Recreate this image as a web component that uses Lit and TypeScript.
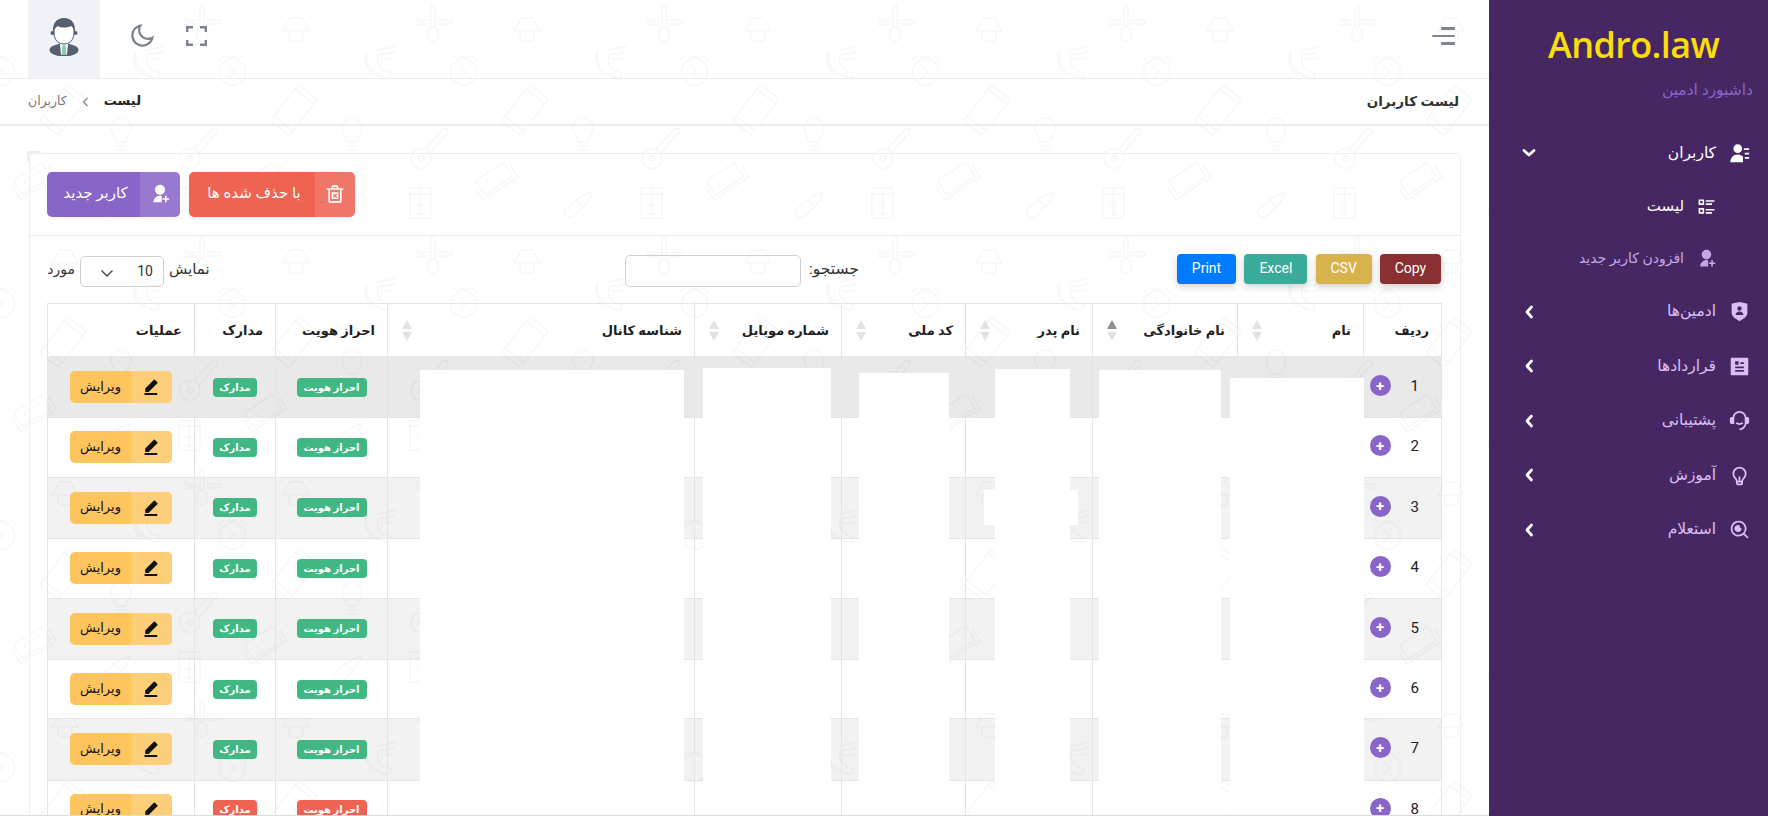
import { LitElement, html, css, svg, unsafeCSS } from "lit";
import { customElement } from "lit/decorators.js";

const tileBody = `
<g fill="none" stroke="#f7f7f7" stroke-width="1.500" stroke-linecap="round" stroke-linejoin="round">
  <g id="fork">
    <ellipse cx="202" cy="34" rx="5.500" ry="7.500"/>
    <path d="M200 26V7a2 2 0 0 1 4 0v19"/>
    <path d="M206 20h13a2 2 0 0 1 0 4h-13M197 20h-6l-6-1M197 24h-6l-6 1M185 22h8"/>
  </g>
  <path d="M59 18h12l7 13H52zM58 31v7a3 3 0 0 0 3 3h8a3 3 0 0 0 3-3v-7"/>
  <path d="M136 50c-3 14 6 26 20 28 4 1 6-5 2-6-8-1-13-8-11-16M146 50c6-1 14-2 18-4M148 54c6 0 12-1 15-2M150 59c5 1 9 0 12-1M134 54c-1 8 2 16 8 21"/>
  <g id="timer"><circle cx="1" cy="72" r="13.500"/><path d="M-3 66l7 6-7 6M-9 57l-4 3M11 57l4 3M-4 57h10"/></g>
  <g transform="translate(232 0)"><circle cx="1" cy="72" r="13.500"/><path d="M-3 66l7 6-7 6M-9 57l-4 3M11 57l4 3M-4 57h10"/></g>
  <g transform="rotate(38 63 110)"><rect x="51" y="87" width="24" height="46" rx="3"/><path d="M51 93h24M51 127h24"/></g>
  <path d="M116 142c0-5-5-7-5-14a10 10 0 0 1 20 0c0 7-5 9-5 14zM116 146h10M118 150h6"/>
  <g transform="rotate(42 202 145)"><circle cx="202" cy="163" r="10"/><circle cx="202" cy="163" r="2.500"/><path d="M199 153v-27l3-3 3 3v4l-2 2 2 2v4l-2 2 2 2v11"/></g>
  <g transform="rotate(-33 33 180)"><rect x="16" y="170" width="34" height="17" rx="3"/><path d="M12 176v14h42v-14M18 190v3M48 190v3M25 177h1M33 177h1M41 177h1"/></g>
  <path d="M179 188h21v30h-21zM189.500 188v30M179 194h21M186 204l3 3 3-3M186 214h7"/>
  <path d="M103 215c-2-3 0-5 2-7l12-10c4-3 9-5 13-6-1 5-3 9-7 13l-11 11c-3 2-6 2-9-1zM113 199l9 8"/>
</g>`;
const tile = `<svg xmlns="http://www.w3.org/2000/svg" width="231" height="232" viewBox="0 0 231 232">${tileBody}</svg>`;
const tileUrl = unsafeCSS(`url("data:image/svg+xml,${encodeURIComponent(tile)}")`);
const chevUrl = unsafeCSS(`url("data:image/svg+xml,${encodeURIComponent('<svg xmlns="http://www.w3.org/2000/svg" width="14" height="9" viewBox="0 0 14 9"><path d="M1.500 1.500L7 7l5.500-5.500" fill="none" stroke="#444" stroke-width="1.300"/></svg>')}")`);

const I = {
  userList: svg`<path d="M10 11.500a5 5 0 1 1 0-10 5 5 0 0 1 0 10zM1.500 22c0-5 3.500-9 8.500-9 2.500 0 4.500 1 6 2.500V22z"/><path d="M17 6h6v2h-6zM18 11h5v2h-5zM18 16h5v2h-5z"/>`,
  listSet: svg`<path d="M2 3h7v7H2zM4 5v3h3V5zM2 14h7v7H2zM4 16v3h3v-3zM11 4h11v2H11zM11 8h8v2h-8zM11 15h11v2H11zM11 19h8v2h-8z"/>`,
  userAdd: svg`<path d="M14 14.252V22H4a8 8 0 0 1 10-7.748zM12 13c-3.315 0-6-2.685-6-6s2.685-6 6-6 6 2.685 6 6-2.685 6-6 6zm6 4v-3h2v3h3v2h-3v3h-2v-3h-3v-2h3z"/>`,
  shield: svg`<path d="M3.783 2.826L12 1l8.217 1.826a1 1 0 0 1 .783.976v9.987a6 6 0 0 1-2.672 4.992L12 23l-6.328-4.219A6 6 0 0 1 3 13.790V3.802a1 1 0 0 1 .783-.976zM12 11a2.500 2.500 0 1 0 0-5 2.500 2.500 0 0 0 0 5zm-4.473 5h8.946a4.500 4.500 0 0 0-8.946 0z"/>`,
  article: svg`<path d="M21 22H3a1 1 0 0 1-1-1V3a1 1 0 0 1 1-1h18a1 1 0 0 1 1 1v18a1 1 0 0 1-1 1zM7 6v4h4V6H7zm0 6v2h10v-2H7zm0 4v2h10v-2H7zm6-9v2h4V7h-4z"/>`,
  headset: svg`<path d="M21 8a2 2 0 0 1 2 2v4a2 2 0 0 1-2 2h-1.062A8.001 8.001 0 0 1 12 23v-2a6 6 0 0 0 6-6V9A6 6 0 1 0 6 9v7H3a2 2 0 0 1-2-2v-4a2 2 0 0 1 2-2h1.062a8.001 8.001 0 0 1 15.876 0H21z"/><path d="M7.760 15.785l1.060-1.696A5.972 5.972 0 0 0 12 15a5.972 5.972 0 0 0 3.180-.911l1.060 1.696A7.963 7.963 0 0 1 12 17a7.963 7.963 0 0 1-4.240-1.215z"/>`,
  bulb: svg`<path d="M9.973 18H11v-5h2v5h1.027c.132-1.202.745-2.194 1.740-3.277.113-.122.832-.867.917-.973a6 6 0 1 0-9.370-.002c.086.107.807.853.918.974.996 1.084 1.609 2.076 1.741 3.278zM10 20v1h4v-1h-4zm-4.246-5a8 8 0 1 1 12.490.002C17.624 15.774 16 17 16 18.500V21a2 2 0 0 1-2 2h-4a2 2 0 0 1-2-2v-2.500C8 17 6.375 15.774 5.754 15z"/>`,
  search: svg`<path d="M18.031 16.617l4.283 4.282-1.415 1.415-4.282-4.283A8.960 8.960 0 0 1 11 20c-4.968 0-9-4.032-9-9s4.032-9 9-9 9 4.032 9 9a8.960 8.960 0 0 1-1.969 5.617zm-2.006-.742A6.977 6.977 0 0 0 18 11c0-3.868-3.133-7-7-7-3.868 0-7 3.132-7 7 0 3.867 3.132 7 7 7a6.977 6.977 0 0 0 4.875-1.975l.150-.150z"/><path d="M12.500 7.300a2 2 0 0 0 1.700 3 4 4 0 1 1-3.200-3.300c.5 0 1 .1 1.500.3z"/>`,
  trash: svg`<path d="M8 5V3a1.500 1.500 0 0 1 1.500-1.500h5A1.500 1.500 0 0 1 16 3v2h6v2h-2v14a1.500 1.500 0 0 1-1.500 1.500h-13A1.500 1.500 0 0 1 4 21V7H2V5zm2 0h4V3.500h-4zM6 7v13.500h12V7z"/><path d="M8 10h8v8H8zm2.400 1.300L9.300 12.400l1.600 1.600-1.600 1.600 1.100 1.100 1.600-1.600 1.600 1.600 1.100-1.100-1.600-1.600 1.600-1.600-1.100-1.100-1.600 1.600z"/>`,
  edit: svg`<path d="M7.500 18.500H3v-4.500L14.435 2.322a1 1 0 0 1 1.414 0l3.329 3.329a1 1 0 0 1 0 1.414L7.500 18.500zM2 20h17v2.500H2V20z"/>`,
  moon: svg`<path d="M10 7a7 7 0 0 0 12 4.900v.1c0 5.523-4.477 10-10 10S2 17.523 2 12 6.477 2 12 2h.1A6.979 6.979 0 0 0 10 7zm-6 5a8 8 0 0 0 15.062 3.762A9 9 0 0 1 8.238 4.938 7.999 7.999 0 0 0 4 12z"/>`,
};

const icon = (p: unknown, cls = "ic") => html`<svg class=${cls} viewBox="0 0 24 24" fill="currentColor">${p}</svg>`;
const chevron = (down: boolean) => html`<svg class="chev" viewBox="0 0 14 14" fill="none" stroke="currentColor" stroke-width="2.800" stroke-linecap="round" stroke-linejoin="round">
  <path d=${down ? "M2 4.500l5 4.500 5-4.500" : "M9.500 2L5 7l4.500 5"}></path></svg>`;

@customElement("side-bar")
class SideBar extends LitElement {
  static styles = css`
    :host { display: block; width: 279px; flex: none; height: 816px; background: #472763; color: #d9bff3;
      font-family: Roboto, "DejaVu Sans", sans-serif; direction: rtl; }
    .logo { height: 78px; display: flex; align-items: flex-end; padding-left: 59px; box-sizing: border-box;
      direction: ltr; justify-content: flex-start; font-family: "Open Sans", sans-serif; font-weight: 600; font-size: 36px; line-height: 66px; color: #fade0a; letter-spacing: -.6px; }
    .sub { color: #8a65c9; font-size: 15.500px; padding: 1px 15px 0 0; height: 24px; line-height: 22px; }
    nav { margin-top: 23px; display: flex; flex-direction: column; }
    .item { height: 54.500px; display: flex; align-items: center; padding: 0 18px 0 33px; gap: 13px; font-size: 15.500px; }
    .item span { flex: 1; margin-top: -1px; }
    .item.on { color: #fff; }
    .item.child { height: 52px; padding-right: 52px; gap: 13px; color: #c6a7e8; font-size: 14px; }
    .item.child.on { color: #fff; font-size: 15px; font-weight: 400; }
    .ic { width: 21px; height: 21px; flex: none; }
    .child .ic { width: 19px; height: 19px; }
    .chev { width: 14px; height: 14px; flex: none; color: #fff; }
  `;
  render() {
    const rows: [unknown, string][] = [[I.shield, "ادمین‌ها"], [I.article, "قراردادها"], [I.headset, "پشتیبانی"], [I.bulb, "آموزش"], [I.search, "استعلام"]];
    return html`
      <div class="logo">Andro.law</div>
      <div class="sub">داشبورد ادمین</div>
      <nav>
        <div class="item on">${icon(I.userList)}<span>کاربران</span>${chevron(true)}</div>
        <div class="item child on">${icon(I.listSet)}<span>لیست</span></div>
        <div class="item child">${icon(I.userAdd)}<span>افزودن کاربر جدید</span></div>
        ${rows.map(([p, t]) => html`<div class="item">${icon(p)}<span>${t}</span>${chevron(false)}</div>`)}
      </nav>`;
  }
}

const COLS = [78, 126, 145, 127, 124, 147, 307, 112, 81, 147];
const HEAD: [string, boolean, boolean][] = [
  ["ردیف", false, false], ["نام", true, false], ["نام خانوادگی", true, true], ["نام پدر", true, false], ["کد ملی", true, false],
  ["شماره موبایل", true, false], ["شناسه کانال", true, false], ["احراز هویت", false, false], ["مدارک", false, false], ["عملیات", false, false],
];
// Blanked-out data columns: [left, right, top] in page coordinates.
const MASKS = [[419, 683, 370], [702, 830, 368], [858, 948, 373], [994, 1069, 369], [1098, 1220, 370], [1229, 1363, 378]];

@customElement("users-table")
class UsersTable extends LitElement {
  static styles = css`
    :host { display: block; position: relative; direction: rtl; color: #222; }
    table { border-collapse: collapse; table-layout: fixed; width: 1394px; font-size: 13.500px; }
    th, td { border: 1px solid #e5e5e5; padding: 0; }
    th { height: 52px; font-weight: 700; padding: 0 12px 0 14px; font-size: 13px; color: #222; }
    th div { display: flex; justify-content: space-between; align-items: center; }
    .sort { display: flex; flex-direction: column; gap: 3px; }
    .sort i { display: block; width: 0; height: 0; border-left: 5px solid transparent; border-right: 5px solid transparent; }
    .sort .u { border-bottom: 9px solid #e2e2e2; }
    .sort .d { border-top: 9px solid #e2e2e2; }
    .sort.active .u { border-bottom-color: #8e8e8e; }
    tbody tr:nth-child(odd) { height: 61.200px; background: rgba(0,0,0,.05); }
    tbody tr:nth-child(even) { height: 59.600px; }
    tbody tr:first-child { background: rgba(0,0,0,.085); }
    td { text-align: center; vertical-align: middle; }
    .num { display: flex; align-items: center; padding-right: 22px; gap: 20px; font-size: 15px; font-family: Roboto, sans-serif; }
    .num span:first-child { margin-top: -2px; }
    .plus { width: 21px; height: 21px; border-radius: 50%; background: #8a65c9; color: #fff; display: flex; align-items: center; justify-content: center; font-size: 15px; font-weight: 700; margin-top: -3px; }
    .badge { display: inline-block; color: #fff; font-weight: 700; font-size: 10px; line-height: 19px; height: 19px; padding: 0 6px; border-radius: 4px; background: #41b883; vertical-align: middle; }
    .badge.a { width: 58px; } .badge.b { width: 32px; }
    .badge.red { background: #ee6352; }
    .edit { margin-right: 22px; display: flex; width: 102px; height: 32px; border-radius: 5px; background: #fec55f; color: #111; font-size: 13px; align-items: center; overflow: hidden; }
    .edit b { width: 41px; height: 100%; background: #fecf78; display: flex; align-items: center; justify-content: center; flex: none; }
    .edit svg { width: 18px; height: 18px; }
    .edit span { flex: 1; text-align: center; margin-top: -2px; }
    .mask { position: absolute; bottom: -300px; background: #fff; }
  `;
  render() {
    return html`
      <table>
        <colgroup>${COLS.map((w) => html`<col style="width:${w}px" />`)}</colgroup>
        <thead><tr>${HEAD.map(([t, s, a]) => html`<th><div><span>${t}</span>${s ? html`<span class="sort ${a ? "active" : ""}"><i class="u"></i><i class="d"></i></span>` : ""}</div></th>`)}</tr></thead>
        <tbody>
          ${[1, 2, 3, 4, 5, 6, 7, 8].map((n) => html`<tr>
            <td><div class="num"><span>${n}</span><span class="plus">+</span></div></td>
            <td></td><td></td><td></td><td></td><td></td><td></td>
            <td><span class="badge a ${n === 8 ? "red" : ""}">احراز هویت</span></td>
            <td><span class="badge b ${n === 8 ? "red" : ""}">مدارک</span></td>
            <td><div class="edit"><b>${icon(I.edit, "")}</b><span>ویرایش</span></div></td>
          </tr>`)}
        </tbody>
      </table>
      ${MASKS.map(([l, r, t]) => html`<div class="mask" style="left:${l - 47}px;width:${r - l}px;top:${t - 303}px"></div>`)}
      <div class="mask" style="left:${983 - 47}px;width:94px;top:${490 - 303}px;bottom:auto;height:35px"></div>`;
  }
}

@customElement("app-root")
export class AppRoot extends LitElement {
  static styles = css`
    :host { display: flex; width: 1768px; height: 816px; overflow: hidden; direction: rtl; background: #fff;
      font-family: Roboto, "DejaVu Sans", sans-serif; color: #222; }
    main { width: 1489px; flex: none; height: 816px; overflow: hidden; position: relative; background: #fff ${tileUrl} 0 0 repeat; }
    main::after { content: ""; position: absolute; left: 0; right: 0; bottom: 0; height: 1px; background: #dcdcdc; }
    .top { height: 78px; box-sizing: content-box; border-bottom: 1px solid #ececec; display: flex; justify-content: space-between; align-items: center; padding: 0 34px 0 28px; }
    .burger { display: flex; flex-direction: column; gap: 5px; align-items: flex-start; width: 23px; margin-top: -6px; }
    .burger i { display: block; height: 2.500px; width: 14px; background: #7d8498; margin-left: 9px; border-radius: 1px; }
    .burger i:nth-child(2) { width: 23px; margin-left: 0; }
    .tools { display: flex; align-items: center; height: 78px; color: #7b8190; }
    .fs { width: 21px; height: 20px; margin-top: -7px; }
    .moon { width: 27px; height: 27px; margin: -7px 30px 0 29px; }
    .avatar { width: 72px; height: 78px; background: #f1f1f8; display: flex; align-items: center; justify-content: center; }
    .avatar svg { width: 30px; height: 38px; margin-top: -4px; }
    .crumbs { height: 45px; border-bottom: 2px solid #ececec; display: flex; justify-content: space-between; align-items: center; padding: 0 30px 0 28px; }
    .crumbs h1 { font-size: 13.500px; font-weight: 700; margin: -1px 0 0; color: #333; }
    .path { display: flex; align-items: center; gap: 15px; font-size: 12.500px; color: #777; margin-top: -2px; }
    .path b { color: #222; font-weight: 600; font-size: 13px; }
    .path svg { width: 7px; height: 10px; margin-top: 2px; }
    .card { margin: 27px 28px 0 29px; border: 1px solid #eee; border-radius: 5px; position: relative; }
    .card::before { content: ""; position: absolute; top: -3px; left: -3px; width: 14px; height: 10px; border-top: 3px solid #eee; border-left: 2px solid #eee; box-sizing: border-box; }
    .head { height: 81px; border-bottom: 1px solid #eaeaea; display: flex; justify-content: flex-end; align-items: center; gap: 9px; padding: 0 18px 0 17px; box-sizing: content-box; }
    .btn { height: 45px; border-radius: 5px; color: #fff; display: flex; align-items: center; font-size: 15px; overflow: hidden; margin-top: -1px; white-space: nowrap; }
    .btn b { width: 40px; height: 100%; display: flex; align-items: center; justify-content: center; background: rgba(255,255,255,.13); flex: none; }
    .btn svg { width: 20px; height: 20px; }
    .btn span { padding: 0 0 0 4px; flex: 1; text-align: center; margin-top: -3px; }
    .btn.red { background: #ee6352; width: 166px; }
    .btn.pur { background: #8a65c9; width: 133px; }
    .body { padding: 18px 18px 0; }
    .tools2 { display: flex; justify-content: space-between; align-items: flex-start; height: 49px; }
    .exports { display: flex; gap: 8.330px; margin-right: 1px; }
    .exports button { border: 0; height: 30px; border-radius: 4px; color: #fff; font: 14px Roboto, sans-serif; box-shadow: 0 3px 7px rgba(0,0,0,.18); padding: 0 0 2px; }
    .search, .len { display: flex; align-items: center; font-size: 15.500px; color: #333; height: 32px; margin-top: 1px; }
    .search span, .len span { margin-top: -4px; }
    .search input { width: 176px; height: 32px; box-sizing: border-box; border: 1px solid #cfcfd8; border-radius: 5px; background: transparent; margin-right: 8px; outline: 0; }
    .len { font-size: 15px; }
    .len select { width: 84px; height: 31px; margin: 0 5px; border: 1px solid #cfcfd8; border-radius: 5px; background: transparent ${chevUrl} no-repeat 19px 12px; appearance: none; font: 14px Roboto, sans-serif; color: #333; padding: 0 10px 0 0; direction: rtl; outline: 0; }
    .len .m { width: 27px; white-space: nowrap; font-size: 14px; }
    .search { margin-left: 97px; }
  `;
  render() {
    return html`
      <side-bar></side-bar>
      <main>
        <header class="top">
          <div class="burger"><i></i><i></i><i></i></div>
          <div class="tools">
            <svg class="fs" viewBox="0 0 21 20" fill="none" stroke="currentColor" stroke-width="2.400"><path d="M1.200 6V1.200H7M14 1.200h5.800V6M19.800 14v4.800H14M7 18.800H1.200V14"></path></svg>
            ${icon(I.moon, "moon")}
            <div class="avatar">
              <svg viewBox="0 0 30 38">
                <ellipse cx="15" cy="32" rx="14.500" ry="6.500" fill="#56606d"></ellipse>
                <path d="M11 26h8l-1 11h-6z" fill="#fff"></path>
                <path d="M13.500 27h3l1 10h-5z" fill="#8fc9b4"></path>
                <circle cx="3.500" cy="15" r="2" fill="#56606d"></circle><circle cx="26.500" cy="15" r="2" fill="#56606d"></circle>
                <path d="M5 14c0-8 4-10 10-10s10 2 10 10c0 8-4 12-10 12S5 22 5 14z" fill="#fff" stroke="#56606d" stroke-width="1"></path>
                <path d="M4 15C3 5 8 0 15 0s12 5 11 15c-1-4-2-6-4-7-4 2-10 2-13 0-2 1-4 3-5 7z" fill="#56606d"></path>
              </svg>
            </div>
          </div>
        </header>
        <div class="crumbs">
          <h1>لیست کاربران</h1>
          <div class="path"><b>لیست</b><svg viewBox="0 0 7 10" fill="none" stroke="#888" stroke-width="1.300"><path d="M5.500 1L1.500 5l4 4"></path></svg><span>کاربران</span></div>
        </div>
        <section class="card">
          <div class="head">
            <div class="btn red"><b>${icon(I.trash, "")}</b><span>با حذف شده ها</span></div>
            <div class="btn pur"><b>${icon(I.userAdd, "")}</b><span>کاربر جدید</span></div>
          </div>
          <div class="body">
            <div class="tools2">
              <div class="exports">
                <button style="background:#8a3033;width:61px">Copy</button>
                <button style="background:#d9b24e;width:56px">CSV</button>
                <button style="background:#3aab9a;width:63px">Excel</button>
                <button style="background:#007bff;width:59px">Print</button>
              </div>
              <label class="search"><span>جستجو:</span><input type="text" /></label>
              <div class="len"><span>نمایش</span><select><option>10</option></select><span class="m">مورد</span></div>
            </div>
            <users-table></users-table>
          </div>
        </section>
      </main>`;
  }
}
